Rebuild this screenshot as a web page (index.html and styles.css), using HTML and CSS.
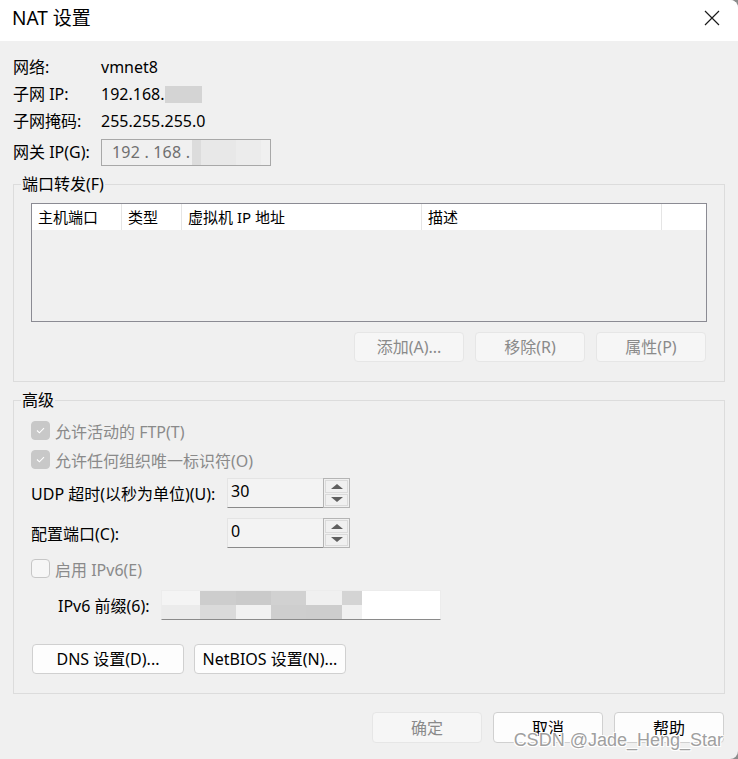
FILE: index.html
```html
<!DOCTYPE html>
<html lang="zh-CN">
<head>
<meta charset="utf-8">
<title>NAT 设置</title>
<link rel="stylesheet" href="styles.css">
</head>
<body>
<div class="window">
  <div class="titlebar">
    <span class="title">NAT 设置</span>
    <span class="close">
      <svg width="16" height="16" viewBox="0 0 16 16"><path d="M1 1 L15 15 M15 1 L1 15" stroke="#1a1a1a" stroke-width="1.2" fill="none"/></svg>
    </span>
  </div>
  <div class="content">
    <div class="info">
      <div class="info-row"><span class="info-label">网络:</span><span>vmnet8</span></div>
      <div class="info-row"><span class="info-label">子网 IP:</span><span class="ip">192.168.<span class="blur-a"></span></span></div>
      <div class="info-row"><span class="info-label">子网掩码:</span><span>255.255.255.0</span></div>
      <div class="info-row gw-row"><span class="info-label">网关 IP(G):</span>
        <span class="gw-input"><span class="gw-text">192 . 168 .</span><span class="blur-b"></span><span class="blur-c"></span><span class="blur-d"></span></span>
      </div>
    </div>

    <div class="group group-port">
      <span class="legend">端口转发(F)</span>
      <div class="list">
        <div class="list-head">
          <span class="col c1">主机端口</span>
          <span class="col c2">类型</span>
          <span class="col c3">虚拟机 IP 地址</span>
          <span class="col c4">描述</span>
          <span class="col c5"></span>
        </div>
      </div>
      <div class="btn-row">
        <button class="btn disabled">添加(A)...</button>
        <button class="btn disabled">移除(R)</button>
        <button class="btn disabled">属性(P)</button>
      </div>
    </div>

    <div class="group group-adv">
      <span class="legend">高级</span>
      <div class="check-row first">
        <span class="cb checked"><svg width="9" height="7" viewBox="0 0 9 7"><path d="M1 3.5 L3.4 5.8 L8 1.2" stroke="#fff" stroke-width="1.1" fill="none"/></svg></span>
        <span class="cb-label">允许活动的 FTP(T)</span>
      </div>
      <div class="check-row">
        <span class="cb checked"><svg width="9" height="7" viewBox="0 0 9 7"><path d="M1 3.5 L3.4 5.8 L8 1.2" stroke="#fff" stroke-width="1.1" fill="none"/></svg></span>
        <span class="cb-label">允许任何组织唯一标识符(O)</span>
      </div>
      <div class="spin-row udp">
        <span class="spin-label">UDP 超时(以秒为单位)(U):</span>
        <span class="spinner">
          <span class="spin-input">30</span>
          <span class="spin-btns">
            <span class="spin-btn"><span class="tri up"></span></span>
            <span class="spin-btn"><span class="tri down"></span></span>
          </span>
        </span>
      </div>
      <div class="spin-row cfg">
        <span class="spin-label">配置端口(C):</span>
        <span class="spinner">
          <span class="spin-input">0</span>
          <span class="spin-btns">
            <span class="spin-btn"><span class="tri up"></span></span>
            <span class="spin-btn"><span class="tri down"></span></span>
          </span>
        </span>
      </div>
      <div class="check-row ipv6">
        <span class="cb"></span>
        <span class="cb-label">启用 IPv6(E)</span>
      </div>
      <div class="prefix-row">
        <span class="prefix-label">IPv6 前缀(6):</span>
        <span class="prefix-input">
          <span class="mosaic">
            <i style="background:#f4f4f4"></i><i style="background:#cdcdcd"></i><i style="background:#cacaca"></i><i style="background:#d1d1d1"></i><i style="background:#f0f0f0"></i><i style="background:#d4d4d4"></i>
            <i style="background:#ebebeb"></i><i style="background:#dadada"></i><i style="background:#f1f1f1"></i><i style="background:#cecece"></i><i style="background:#cdcdcd"></i><i style="background:#f0f0f0"></i>
          </span>
        </span>
      </div>
      <div class="btn-row left">
        <button class="btn normal wide">DNS 设置(D)...</button>
        <button class="btn normal wide">NetBIOS 设置(N)...</button>
      </div>
    </div>

    <div class="footer">
      <button class="btn disabled">确定</button>
      <button class="btn normal">取消</button>
      <button class="btn normal">帮助</button>
    </div>
  </div>
  <div class="watermark">CSDN @Jade_Heng_Star</div>
</div>
</body>
</html>
```

FILE: styles.css
```css
html, body {
  margin: 0;
  padding: 0;
}
html {
  background: #8c8c8c;
}
body {
  width: 738px;
  height: 759px;
  overflow: hidden;
  font-family: "Noto Sans", "Noto Sans CJK SC", sans-serif;
  font-size: 16px;
  color: #000;
}
.window {
  position: relative;
  width: 738px;
  height: 759px;
  background: #f0f0f0;
  border-top-right-radius: 8px;
  border-bottom-right-radius: 8px;
  overflow: hidden;
}
.titlebar {
  height: 41px;
  background: #fff;
  display: flex;
  align-items: center;
  justify-content: space-between;
  padding: 0 18px 0 12px;
}
.title {
  font-size: 19px;
  line-height: 24px;
  margin-top: -5px;
}
.close {
  display: flex;
  margin-top: -5px;
}
.content {
  padding: 0 13px;
}
.info {
  padding-top: 13px;
  display: flex;
  flex-direction: column;
}
.info-row {
  display: flex;
  align-items: center;
  height: 27px;
  line-height: 27px;
}
.info-label {
  width: 88px;
  flex: none;
}
.ip {
  display: flex;
  align-items: center;
}
.blur-a {
  display: inline-block;
  width: 37px;
  height: 17px;
  background: #d4d4d4;
}
.gw-row {
  margin-top: 4px;
}
.gw-input {
  display: flex;
  align-items: center;
  width: 170px;
  height: 27px;
  box-sizing: border-box;
  border: 1px solid #a8a8a8;
  background: #f0f0f0;
  color: #6f6f6f;
}
.gw-text {
  padding-left: 10px;
  width: 80px;
  flex: none;
  letter-spacing: 0.2px;
}
.blur-b {
  width: 9px;
  height: 25px;
  background: #dcdcdc;
}
.blur-c {
  width: 35px;
  height: 25px;
  background: #e8e8e8;
}
.blur-d {
  width: 25px;
  height: 25px;
  background: #ececec;
}

.group {
  border: 1px solid #dcdcdc;
  display: flex;
  flex-direction: column;
  padding: 0 17px 19px 17px;
}
.group-port {
  margin-top: 18px;
}
.legend {
  align-self: flex-start;
  margin: -11px 0 0 -10px;
  padding: 0 1px;
  background: #f0f0f0;
  line-height: 20px;
  height: 20px;
}
.list {
  margin-top: 9px;
  height: 119px;
  box-sizing: border-box;
  border: 1px solid #8b8b93;
  background: #f0f0f0;
}
.list-head {
  display: flex;
  height: 26px;
  background: #fff;
  font-size: 15px;
}
.col {
  box-sizing: border-box;
  border-right: 1px solid #e5e5e5;
  padding-left: 6px;
  line-height: 26px;
  height: 26px;
}
.c1 { width: 90px; }
.c2 { width: 60px; }
.c3 { width: 240px; }
.c4 { width: 240px; }
.c5 { flex: 1; border-right: none; }

.btn-row {
  display: flex;
  justify-content: flex-end;
  gap: 11px;
  margin-top: 10px;
  padding-right: 1px;
}
.btn {
  font-family: inherit;
  font-size: 16px;
  width: 110px;
  height: 30px;
  box-sizing: border-box;
  border-radius: 4px;
  padding: 0;
  line-height: 28px;
  margin: 0;
}
.btn.disabled {
  background: #f6f6f6;
  border: 1px solid #e6e6e6;
  color: #8a8a8a;
}
.btn.normal {
  background: #fdfdfd;
  border: 1px solid #d0d0d0;
  color: #000;
}
.btn.wide {
  width: 152px;
}

.group-adv {
  margin-top: 18px;
}
.check-row {
  display: flex;
  align-items: center;
  height: 29px;
}
.check-row.first {
  margin-top: 6px;
}
.cb {
  width: 19px;
  height: 19px;
  box-sizing: border-box;
  border-radius: 4px;
  border: 1px solid #c6c6c6;
  background: #f6f6f6;
  display: flex;
  align-items: center;
  justify-content: center;
  flex: none;
}
.cb.checked {
  background: #c8c8c8;
  border-color: #c8c8c8;
}
.cb-label {
  margin-left: 5px;
  color: #8a8a8a;
}
.spin-row {
  display: flex;
  align-items: center;
}
.spin-row.udp {
  margin-top: 4px;
}
.spin-row.cfg {
  margin-top: 10px;
}
.spin-label {
  width: 196px;
  flex: none;
}
.spinner {
  display: flex;
  height: 30px;
}
.spin-input {
  width: 96px;
  box-sizing: border-box;
  border: 1px solid #e4e4e4;
  border-bottom: 1px solid #8a8a8a;
  border-right: none;
  background: #f3f3f3;
  padding-left: 3px;
  line-height: 24px;
}
.spin-btns {
  width: 27px;
  box-sizing: border-box;
  border: 1px solid #b4b4b4;
  display: flex;
  flex-direction: column;
  padding: 1px;
  gap: 1px;
  background: #f0f0f0;
}
.spin-btn {
  flex: 1;
  border: 1px solid #dadada;
  display: flex;
  align-items: center;
  justify-content: center;
}
.tri {
  width: 0;
  height: 0;
  border-left: 6px solid transparent;
  border-right: 6px solid transparent;
}
.tri.up {
  border-bottom: 5px solid #5f5f5f;
}
.tri.down {
  border-top: 5px solid #5f5f5f;
}
.check-row.ipv6 {
  margin-top: 6px;
}
.prefix-row {
  display: flex;
  align-items: center;
  margin-top: 7px;
  padding-left: 27px;
}
.prefix-label {
  width: 103px;
  flex: none;
}
.prefix-input {
  width: 280px;
  height: 30px;
  box-sizing: border-box;
  background: #fff;
  border: 1px solid #ececec;
  border-bottom: 1px solid #8a8a8a;
  display: flex;
}
.mosaic {
  display: grid;
  grid-template-columns: 38px 36px 35px 35px 36px 20px;
  grid-template-rows: 14px 14px;
}
.mosaic i {
  display: block;
}
.btn-row.left {
  justify-content: flex-start;
  gap: 10px;
  margin-top: 24px;
  padding-left: 1px;
}
.footer {
  display: flex;
  justify-content: flex-end;
  gap: 11px;
  margin-top: 18px;
  padding-right: 1px;
}
.footer .btn {
  height: 31px;
}
.watermark {
  position: absolute;
  right: 15px;
  bottom: 8px;
  font-family: "Liberation Sans", sans-serif;
  font-size: 18px;
  color: #a0a0a0;
  text-shadow: -1px -1px 0 #fff, 1px -1px 0 #fff, -1px 1px 0 #fff, 1px 1px 0 #fff;
}
```
